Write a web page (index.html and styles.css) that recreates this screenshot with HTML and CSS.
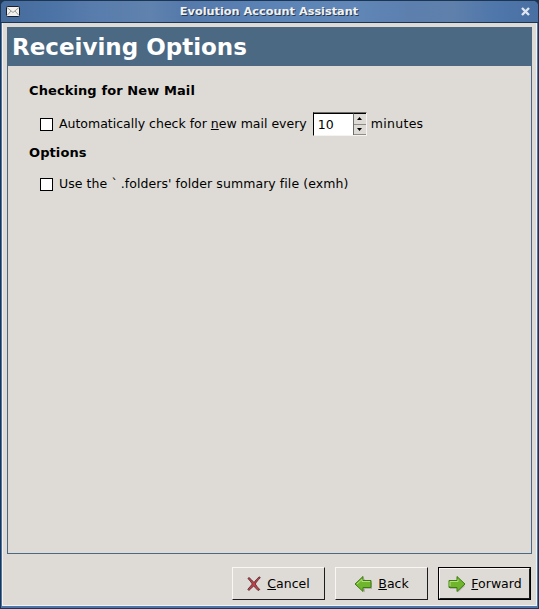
FILE: index.html
```html
<!DOCTYPE html>
<html lang="en">
<head>
<meta charset="utf-8">
<title>Evolution Account Assistant</title>
<link rel="stylesheet" href="styles.css">
</head>
<body>
<div class="window">
  <header class="titlebar">
    <svg class="mail-icon" width="14" height="11" viewBox="0 0 14 11"><rect x="0.5" y="0.5" width="13" height="10" rx="1" fill="#f2f1ee" stroke="#14202e"/><path d="M1 1.500L7 6.500L13 1.500M1 9.500L5 5M13 9.500L9 5" fill="none" stroke="#9a9a96"/></svg>
    <span class="title">Evolution Account Assistant</span>
    <svg class="close-icon" width="9" height="9" viewBox="0 0 9 9"><path d="M1 1L8 8M8 1L1 8" stroke="#dfe6ef" stroke-width="2.4"/></svg>
  </header>
  <div class="client">
    <div class="page">
      <div class="banner">Receiving Options</div>
      <div class="panel">
        <h2 class="section-title">Checking for New Mail</h2>
        <div class="row row-first">
          <span class="check"></span>
          <span class="row-text">Automatically check for <u>n</u>ew mail every</span>
          <span class="spin"><span class="spin-value">10</span><span class="spin-btns"><span class="spin-btn"><svg width="5" height="3" viewBox="0 0 5 3"><path d="M2.500 0L5 3H0Z" fill="#000"/></svg></span><span class="spin-btn"><svg width="5" height="3" viewBox="0 0 5 3"><path d="M0 0H5L2.500 3Z" fill="#000"/></svg></span></span></span>
          <span class="row-text minutes">minutes</span>
        </div>
        <h2 class="section-title section-two">Options</h2>
        <div class="row row-second">
          <span class="check"></span>
          <span class="row-text row-text-wide">Use the <span class="tick">`</span>.folders' folder summary file (exmh)</span>
        </div>
      </div>
    </div>
    <footer class="actions">
      <button class="btn btn-cancel"><svg width="14" height="15" viewBox="0 0 14 15"><path d="M2 1.500C4 3 5.500 5 7 6.500C8.500 4.500 10 2.500 12.500 0.800L13.300 1.800C11 4 9.500 6 8.300 8C9.500 10 11 12 12.800 13.500L11 14.500C9.500 13 8 11.500 6.700 10C5 11.500 3.500 13 1.800 14.500L0.800 13.300C2.500 11.500 4 9.500 5.300 8C4 6 2.500 4 0.900 2.500Z" fill="#c4404a" stroke="#4a2226" stroke-width="0.8"/></svg><span><u>C</u>ancel</span></button>
      <button class="btn btn-back"><svg width="19" height="18" viewBox="0 0 19 18"><path d="M3 11L11 3.500V7.500H18V14H11V17.500Z" fill="#000" opacity="0.18"/><path d="M1 9L9 1.500V5.500H17V12.500H9V16.500Z" fill="#6fb62c" stroke="#3f7a12"/><path d="M3 9L8 4.500V6.500H16" fill="none" stroke="#b4e07c"/></svg><span><u>B</u>ack</span></button>
      <span class="default-ring"><button class="btn btn-forward"><svg width="19" height="18" viewBox="0 0 19 18"><path d="M18 11L11 4V7.500H3V14H11V17.500Z" fill="#000" opacity="0.18"/><path d="M18 9L10 1.500V5.500H2V12.500H10V16.500Z" fill="#6fb62c" stroke="#3f7a12"/><path d="M3 11V6.500H11V4.500" fill="none" stroke="#b4e07c"/></svg><span><u>F</u>orward</span></button></span>
    </footer>
  </div>
</div>
</body>
</html>
```
FILE: styles.css
```css
* { box-sizing: border-box; }
html, body { margin: 0; padding: 0; width: 539px; height: 609px; overflow: hidden; background: #1b3552; }
body { font-family: "DejaVu Sans", sans-serif; font-size: 12.5px; color: #000; }
.window {
  width: 539px; height: 609px; display: flex; flex-direction: column;
  background: #4f76a8; border: 1px solid #1b3552; border-radius: 6px 6px 0 0; overflow: hidden;
}
.titlebar {
  height: 22px; flex: none; display: flex; align-items: center; gap: 0;
  padding: 0 8px 0 5px;
  background: linear-gradient(90deg, #466b9d 0%, #4d74a6 10%, #587cac 17%, #5f82ae 28%, #5579ab 34%, #5b83b6 50%, #6087b7 66%, #5c7fae 76%, #5f80ab 84%, #4f77ab 92%, #4a6fa2 100%);
  border-bottom: 1px solid #1b3552;
}
.title { flex: 1; text-align: center; color: #f2f2f2; font-weight: bold; font-size: 11.3px; padding-right: 3px; text-shadow: 1px 1px 0 #26384f; }
.client {
  flex: 1; display: flex; flex-direction: column; background: #dedbd6;
  margin: 0 1px 2px 1px; padding: 4px 4px 0 4px; border: 1px solid #f4f3f0; border-top: 0;
}
.page { height: 527px; flex: none; display: flex; flex-direction: column; border: 1px solid #4b6983; }
.banner { height: 38px; flex: none; background: #4b6983; color: #fff; font-weight: bold; font-size: 23px; line-height: 38px; padding-left: 4px; }
.panel { flex: 1; padding: 17px 21px; }
.section-title { margin: 0; font-size: 13px; font-weight: bold; line-height: 16px; letter-spacing: 0.1px; }
.section-two { margin-top: 9px; }
.row { display: flex; align-items: center; gap: 6px; padding-left: 11px; height: 24px; }
.row-first { margin-top: 13px; }
.row-second { margin-top: 11px; }
.row-text { padding-bottom: 2px; }
.row-text-wide { letter-spacing: 0.07px; }
.minutes { margin-left: -2px; letter-spacing: 0.3px; }
.tick { padding-right: 3px; }
.check { width: 13px; height: 13px; background: #fff; border: 1px solid #000; flex: none; }
.spin { display: flex; width: 54px; height: 24px; background: #fff; border: 1px solid; border-color: #6e6d6a #f4f3f0 #f4f3f0 #000; }
.spin-value { flex: 1; padding-left: 4px; line-height: 21px; border-top: 1px solid #000; }
.spin-btns { width: 13px; display: flex; flex-direction: column; border-left: 1px solid #6e6d6a; border-top: 1px solid #000; }
.spin-btn { flex: 1; display: flex; align-items: center; justify-content: center; background: #dedbd6; border-bottom: 1px solid #8f8d88; }
.actions { flex: 1; display: flex; justify-content: flex-end; align-items: flex-start; gap: 10px; padding: 13px 1px 0 0; }
.btn {
  width: 93px; height: 33px; display: flex; align-items: center; justify-content: center; gap: 5px;
  font: 12.5px "DejaVu Sans", sans-serif; color: #000; background: #dedbd6; padding: 0;
  border: 1px solid; border-color: #f8f7f5 #1c1c1c #1c1c1c #f8f7f5;
}
.btn-cancel { gap: 6px; }
.default-ring { display: flex; border: 1px solid #000; }
.btn-forward { width: 91px; height: 31px; }
```
